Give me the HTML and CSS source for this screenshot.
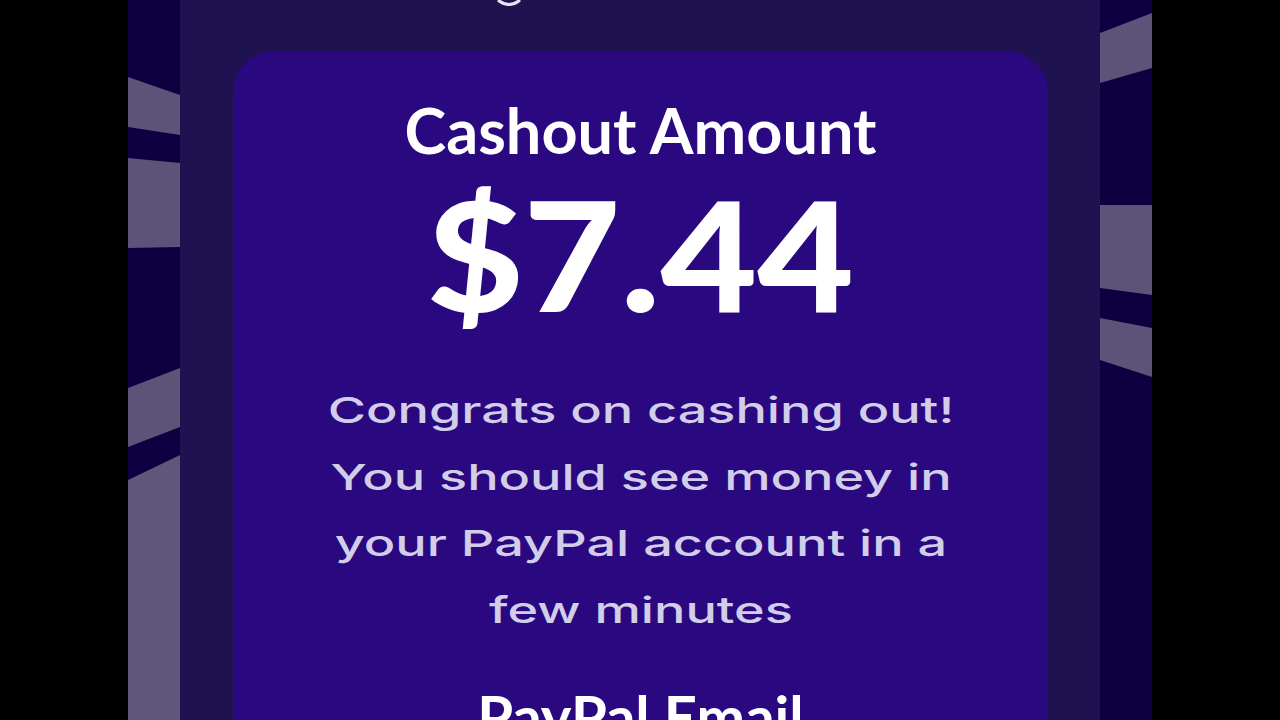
FILE: index.html
```html
<!DOCTYPE html>
<html lang="en">
<head>
<meta charset="utf-8">
<title>Cashout</title>
<link rel="stylesheet" href="styles.css">
</head>
<body>
<div class="screen">
  <div class="gutter"></div>
  <div class="phone">
    <svg class="strip" viewBox="0 0 52 720" preserveAspectRatio="none" aria-hidden="true">
      <rect width="52" height="720" fill="#0c0040"/>
      <polygon points="0,77 52,95 52,135 0,127" fill="#5c5378"/>
      <polygon points="0,158 52,163 52,247 0,248" fill="#5c5378"/>
      <polygon points="0,388 52,368 52,427 0,447" fill="#5c5378"/>
      <polygon points="0,480 52,455 52,720 0,720" fill="#5f5679"/>
    </svg>
    <div class="modal">
      <svg class="peek" viewBox="0 0 24 6" aria-hidden="true">
        <path d="M1 0 Q12 9 23 0" fill="none" stroke="#e8e4f4" stroke-width="3"/>
      </svg>
      <div class="card">
        <h1 class="title">Cashout Amount</h1>
        <div class="amount">$7.44</div>
        <p class="message">Congrats on cashing out! You should see money in your PayPal account in a few minutes</p>
        <h2 class="label">PayPal Email</h2>
      </div>
    </div>
    <svg class="strip" viewBox="0 0 52 720" preserveAspectRatio="none" aria-hidden="true">
      <rect width="52" height="720" fill="#0c0040"/>
      <polygon points="0,33 52,13 52,68 0,83" fill="#5c5378"/>
      <polygon points="0,205 52,205 52,295 0,288" fill="#5c5378"/>
      <polygon points="0,318 52,328 52,377 0,360" fill="#5c5378"/>
    </svg>
  </div>
  <div class="gutter"></div>
</div>
</body>
</html>
```

FILE: styles.css
```css
* { box-sizing: border-box; }
html, body {
  margin: 0;
  padding: 0;
  width: 1280px;
  height: 720px;
  overflow: hidden;
  background: #000;
  font-family: "Lato", "Noto Sans", sans-serif;
}
.screen {
  display: flex;
  width: 1280px;
  height: 720px;
}
.gutter {
  width: 128px;
  flex: none;
  background: #000;
}
.phone {
  display: flex;
  width: 1024px;
  height: 720px;
  flex: none;
}
.strip {
  display: block;
  width: 52px;
  height: 720px;
  flex: none;
}
.modal {
  width: 920px;
  height: 720px;
  flex: none;
  background: #1e1350;
  padding: 0 52px 0 53px;
  display: flex;
  flex-direction: column;
  overflow: hidden;
}
.peek {
  display: block;
  flex: none;
  width: 24px;
  height: 6px;
  margin: 0 0 45px 264px;
}
.card {
  flex: none;
  min-height: 700px;
  background: #2a0880;
  border-radius: 42px 42px 0 0;
  padding-top: 44px;
  text-align: center;
  color: #fff;
}
.title {
  margin: 0;
  font-size: 63px;
  line-height: 70px;
  font-weight: 700;
}
.amount {
  margin-top: 10px;
  font-size: 152px;
  line-height: 156px;
  font-weight: 900;
  transform: scaleX(1.1);
}
.message {
  margin: 46px auto 0;
  width: 480px;
  font-family: "Inter", "Noto Sans", sans-serif;
  font-size: 36px;
  line-height: 66.5px;
  font-weight: 500;
  color: #d2cde8;
  transform: scaleX(1.45);
}
.label {
  margin: 43px 0 0;
  font-size: 58px;
  line-height: 60px;
  font-weight: 700;
}
```
